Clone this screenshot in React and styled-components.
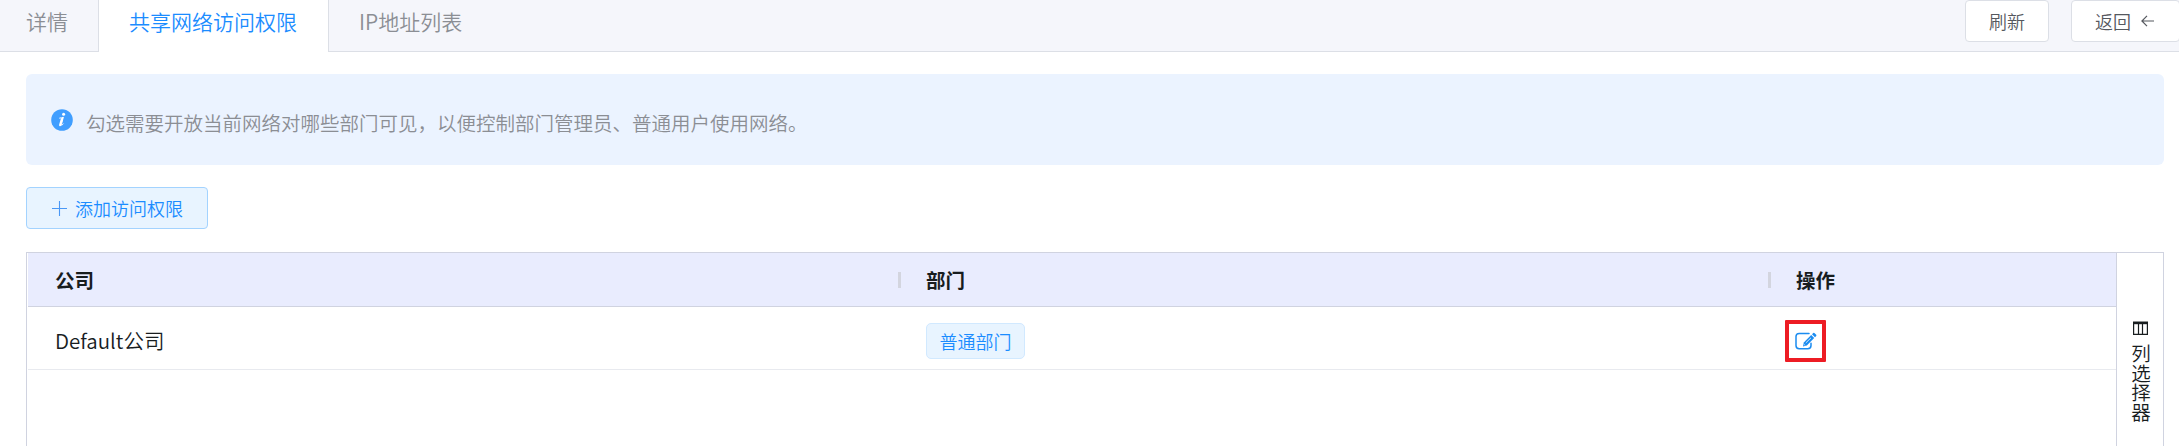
import React from "react";
import styled, { createGlobalStyle } from "styled-components";

const Global = createGlobalStyle`
  * { box-sizing: border-box; }
  body {
    margin: 0;
    background: #fff;
    overflow: hidden;
    font-family: "Noto Sans CJK SC", sans-serif;
    font-weight: 350;
    color: #181d1f;
  }
`;

const Page = styled.div`
  height: 446px;
  overflow: hidden;
  display: flex;
  flex-direction: column;
`;

const TabBar = styled.header`
  flex: none;
  display: flex;
  height: 52px;
  background: #f5f6fb;
`;

const Tab = styled.div`
  width: ${(p) => p.$width}px;
  height: 52px;
  padding: 0 0 ${(p) => (p.$active ? 10 : 9)}px ${(p) => p.$pad}px;
  display: flex;
  align-items: center;
  font-size: 21px;
  white-space: nowrap;
  color: ${(p) => (p.$active ? "#1b8cff" : "#8b8e94")};
  background: ${(p) => (p.$active ? "#fff" : "transparent")};
  border: solid #dcdfe6;
  border-width: ${(p) => (p.$active ? "0 1px" : "0 0 1px")};
`;

const Actions = styled.div`
  flex: 1;
  display: flex;
  justify-content: flex-end;
  gap: 22px;
  margin-right: -1px;
  border-bottom: 1px solid #dcdfe6;
`;

const Button = styled.button`
  width: ${(p) => p.$width}px;
  height: 42px;
  padding: 0 0 0 ${(p) => p.$pad ?? 23}px;
  display: flex;
  align-items: center;
  gap: ${(p) => p.$gap ?? 0}px;
  font: inherit;
  font-size: 18px;
  white-space: nowrap;
  border-radius: 4px;
  color: ${(p) => (p.$primary ? "#1b8cff" : "#55585e")};
  background: ${(p) => (p.$primary ? "#e8f4ff" : "#fff")};
  border: 1px solid ${(p) => (p.$primary ? "#a3d3ff" : "#dcdfe6")};
`;

const Content = styled.main`
  flex: 1;
  min-height: 0;
  display: flex;
  flex-direction: column;
  padding: 22px 15px 0 26px;
`;

const Alert = styled.div`
  flex: none;
  height: 91px;
  margin-bottom: 22px;
  padding-left: 25px;
  display: flex;
  align-items: center;
  gap: 13px;
  border-radius: 6px;
  background: #ebf3ff;
  color: #8b8e94;
  font-size: 19.5px;
`;

const AlertText = styled.span`
  padding-top: 5px;
`;

const TableFrame = styled.section`
  flex: 1;
  min-height: 0;
  margin-top: 23px;
  display: flex;
  border: 1px solid #d0d3e0;
  border-bottom: 0;
`;

const Grid = styled.div`
  flex: 1;
  padding-left: 1px;
`;

const Row = styled.div`
  display: grid;
  grid-template-columns: 870px 870px 1fr;
  align-items: center;
  height: ${(p) => (p.$head ? 54 : 63)}px;
  background: ${(p) => (p.$head ? "#e9ecfe" : "#fff")};
  border-bottom: 1px solid ${(p) => (p.$head ? "#d0d3e0" : "#e8eaef")};
`;

const HeadCell = styled.div`
  display: flex;
  align-items: center;
  gap: 25px;
  padding-left: ${(p) => p.$pad ?? 0}px;
  font-size: 19.5px;
  font-weight: 700;
`;

const Divider = styled.i`
  width: 3px;
  height: 16px;
  background: #d3d5df;
`;

const Cell = styled.div`
  display: flex;
  align-items: center;
  padding: ${(p) => p.$padding};
  font-size: 20.5px;
`;

const Tag = styled.span`
  width: 99px;
  height: 36px;
  display: flex;
  align-items: center;
  justify-content: center;
  font-size: 18px;
  color: #1b8cff;
  background: #e8f4ff;
  border: 1px solid #d1e9ff;
  border-radius: 5px;
`;

const Highlight = styled.span`
  width: 41px;
  height: 42px;
  display: flex;
  align-items: center;
  justify-content: center;
  border: 4px solid #ed1c24;
  border-radius: 1px;
`;

const SideBar = styled.aside`
  width: 47px;
  padding: 68px 0 0 1px;
  display: flex;
  flex-direction: column;
  align-items: center;
  gap: 9px;
  border-left: 1px solid #d0d3e0;
`;

const SideLabel = styled.span`
  writing-mode: vertical-rl;
  font-size: 19.5px;
  line-height: 20px;
`;

const InfoIcon = () => (
  <svg width="22" height="22" viewBox="0 0 22 22">
    <circle cx="11" cy="11" r="10.8" fill="#409eff" />
    <circle cx="12.6" cy="5.3" r="1.5" fill="#fff" />
    <path d="M8.3 9.2Q10.8 8.8 12.3 8.2L10.4 15.6Q10.2 16.6 11 16Q11.9 15.4 12.5 14.6" fill="none" stroke="#fff" strokeWidth="1" />
    <path d="M12.5 8.1L10.4 15.8Q9.9 17.4 8.8 17.3Q7.8 17 8.2 15.5L9.9 9.4Z" fill="#fff" />
  </svg>
);

const PlusIcon = () => (
  <svg width="15" height="15" viewBox="0 0 15 15" stroke="#4a98f6" strokeWidth="1.1">
    <path d="M7.5 0V15M0 7.5H15" />
  </svg>
);

const BackIcon = () => (
  <svg width="13" height="12" viewBox="0 0 13 12" fill="none" stroke="#55585e" strokeWidth="1.2">
    <path d="M6 .8L.9 6L6 11.2M.9 6H13" />
  </svg>
);

const EditIcon = () => (
  <svg width="22" height="18" viewBox="0 0 22 18">
    <path d="M14 1.4H4.2Q1 1.4 1 4.6V13.6Q1 16.8 4.2 16.8H12.8Q16 16.8 16 13.6V11.2" fill="none" stroke="#1b8cf0" strokeWidth="1.5" strokeLinecap="round" />
    <path d="M8 14.6L8.8 10.5L16.2 3L19.2 6L11.8 13.6Z" fill="#1b8cf0" />
    <path d="M17 2.2L18.2 1Q18.8.5 19.4 1L21.2 2.8Q21.7 3.4 21.2 4L20 5.2Z" fill="#1b8cf0" />
    <path d="M10.8 10.9L16 5.8M9.2 12.5L10.2 13.4" stroke="#fff" strokeWidth=".8" />
  </svg>
);

const ColumnsIcon = () => (
  <svg width="15" height="14" viewBox="0 0 15 14" fill="none" stroke="#181d1f">
    <path d="M.6 3V13.4H14.4V3M5.5 3V13.4M9.5 3V13.4" strokeWidth="1.2" />
    <path d="M0 2H15" strokeWidth="2.4" />
    <path d="M0 .4H15" strokeWidth=".8" opacity=".5" />
  </svg>
);

export default function App() {
  return (
    <Page>
      <Global />
      <TabBar>
        <Tab $width={98} $pad={26}>详情</Tab>
        <Tab $width={231} $pad={30} $active>共享网络访问权限</Tab>
        <Tab $width={165} $pad={30}>IP地址列表</Tab>
        <Actions>
          <Button $width={84}>刷新</Button>
          <Button $width={109} $gap={10}>返回<BackIcon /></Button>
        </Actions>
      </TabBar>
      <Content>
        <Alert>
          <InfoIcon />
          <AlertText>勾选需要开放当前网络对哪些部门可见，以便控制部门管理员、普通用户使用网络。</AlertText>
        </Alert>
        <Button $primary $width={182} $pad={25} $gap={8}><PlusIcon />添加访问权限</Button>
        <TableFrame>
          <Grid>
            <Row $head>
              <HeadCell $pad={27}>公司</HeadCell>
              <HeadCell><Divider />部门</HeadCell>
              <HeadCell><Divider />操作</HeadCell>
            </Row>
            <Row>
              <Cell $padding="4px 0 0 27px">Default公司</Cell>
              <Cell $padding="6px 0 0 28px"><Tag>普通部门</Tag></Cell>
              <Cell $padding="5px 0 0 17px"><Highlight><EditIcon /></Highlight></Cell>
            </Row>
          </Grid>
          <SideBar>
            <ColumnsIcon />
            <SideLabel>列选择器</SideLabel>
          </SideBar>
        </TableFrame>
      </Content>
    </Page>
  );
}
